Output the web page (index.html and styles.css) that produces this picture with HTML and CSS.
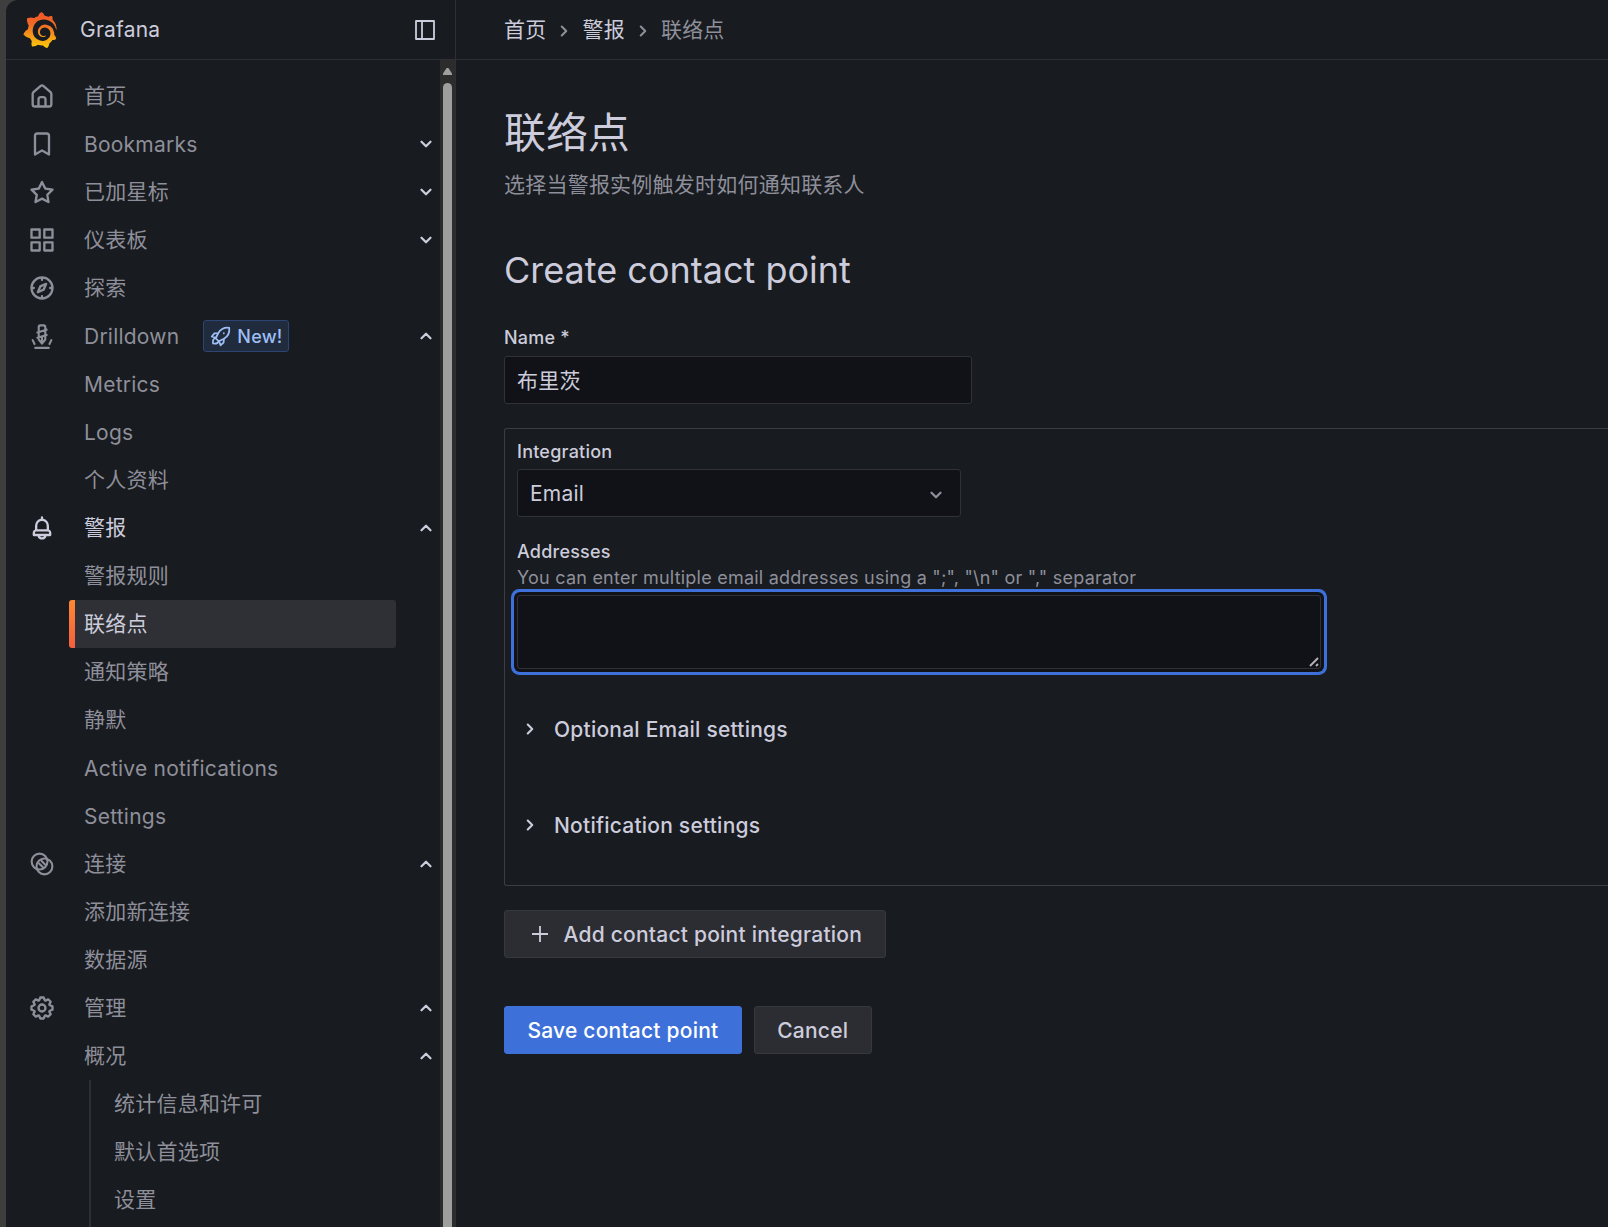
FILE: index.html
```html
<!DOCTYPE html>
<html lang="zh-CN">
<head>
  <meta charset="UTF-8" />
  <meta name="viewport" content="width=device-width, initial-scale=1.0" />
  <title>联络点 - 警报 - Grafana</title>
  <link rel="stylesheet" href="styles.css">
</head>
<body>
  <!-- Shared icons -->
  <svg class="sprite" aria-hidden="true">
    <symbol id="down" viewBox="0 0 24 24"><path d="M6 9l6 6 6-6" fill="none" stroke="currentColor" stroke-width="3" stroke-linecap="round" stroke-linejoin="round"/></symbol>
    <symbol id="up" viewBox="0 0 24 24"><path d="M6 15l6-6 6 6" fill="none" stroke="currentColor" stroke-width="3" stroke-linecap="round" stroke-linejoin="round"/></symbol>
    <symbol id="right" viewBox="0 0 24 24"><path d="M9 6l6 6-6 6" fill="none" stroke="currentColor" stroke-width="2.8" stroke-linecap="round" stroke-linejoin="round"/></symbol>
  </svg>

  <div class="app">
    <aside class="sidebar">
      <div class="brand">
        <svg class="logo" viewBox="0 0 24 24">
          <defs><linearGradient id="flame" x1="0" y1="0" x2="0" y2="1"><stop offset="0.1" stop-color="#f05a28"/><stop offset="0.35" stop-color="#f26b26"/><stop offset="1" stop-color="#fbca0a"/></linearGradient></defs>
          <path fill="url(#flame)" d="M23.02 10.59a8.578 8.578 0 0 0-.862-3.034 8.911 8.911 0 0 0-1.789-2.445c.337-1.342-.413-2.505-.413-2.505-1.292-.08-2.113.4-2.416.62-.052-.02-.102-.044-.154-.064-.22-.089-.446-.172-.677-.247-.231-.073-.47-.14-.711-.197a9.867 9.867 0 0 0-.875-.161C14.557.753 12.94 0 12.94 0c-1.804 1.145-2.147 2.744-2.147 2.744l-.018.093c-.098.029-.2.057-.298.088-.138.042-.275.094-.413.143-.138.055-.275.107-.41.166a8.869 8.869 0 0 0-1.557.87l-.063-.029c-2.497-.955-4.716.195-4.716.195-.203 2.658.996 4.33 1.235 4.636a11.608 11.608 0 0 0-.607 2.635C1.636 12.677.953 15.014.953 15.014c1.926 2.214 4.171 2.351 4.171 2.351.003-.002.006-.002.006-.005.285.509.615.994.986 1.446.156.19.32.371.488.548-.704 2.009.099 3.68.099 3.68 2.144.08 3.553-.937 3.849-1.173a9.784 9.784 0 0 0 3.164.501h.08l.055-.003.107-.002.103-.005.003.002c1.01 1.44 2.788 1.646 2.788 1.646 1.264-1.332 1.337-2.653 1.337-2.94v-.058c0-.02-.003-.039-.003-.06.265-.187.52-.387.758-.6a7.875 7.875 0 0 0 1.415-1.7c1.43.083 2.437-.885 2.437-.885-.236-1.49-1.085-2.216-1.264-2.354l-.018-.013-.016-.013a.217.217 0 0 1-.031-.02c.008-.092.016-.18.02-.27.011-.162.016-.323.016-.48v-.253l-.005-.098-.008-.135a1.891 1.891 0 0 0-.01-.13c-.003-.042-.008-.083-.013-.125l-.016-.124-.018-.122a6.215 6.215 0 0 0-2.032-3.73 6.015 6.015 0 0 0-3.222-1.46 6.292 6.292 0 0 0-.85-.048l-.107.002h-.063l-.044.003-.104.008a4.777 4.777 0 0 0-3.335 1.695c-.332.4-.592.84-.768 1.297a4.594 4.594 0 0 0-.312 1.817l.003.091c.005.055.007.11.013.164a3.615 3.615 0 0 0 .698 1.82 3.53 3.53 0 0 0 1.827 1.282c.33.098.66.14.971.137.039 0 .078 0 .114-.002l.063-.003c.02 0 .041-.003.062-.003.034-.002.065-.007.099-.01.007 0 .018-.003.028-.003l.031-.005.06-.008a1.18 1.18 0 0 0 .112-.02c.036-.008.072-.013.109-.024a2.634 2.634 0 0 0 .914-.415c.028-.02.056-.041.085-.065a.248.248 0 0 0 .039-.35.244.244 0 0 0-.309-.06l-.078.042c-.09.044-.184.083-.283.116a2.476 2.476 0 0 1-.475.096c-.028.003-.054.006-.083.006l-.083.002c-.026 0-.054 0-.08-.002l-.102-.006h-.012l-.024.006c-.016-.003-.031-.003-.044-.006-.031-.002-.06-.007-.091-.01a2.59 2.59 0 0 1-.724-.213 2.557 2.557 0 0 1-.667-.438 2.52 2.52 0 0 1-.805-1.475 2.306 2.306 0 0 1-.029-.444l.006-.122v-.023l.002-.031c.003-.021.003-.04.005-.06a3.163 3.163 0 0 1 1.352-2.29 3.12 3.12 0 0 1 .937-.43 2.946 2.946 0 0 1 .776-.101h.06l.07.002.045.003h.026l.07.005a4.041 4.041 0 0 1 1.635.49 3.94 3.94 0 0 1 1.602 1.662 3.77 3.77 0 0 1 .397 1.414l.005.076.003.075c.002.026.002.05.002.075 0 .024.003.052 0 .07v.065l-.002.073-.008.174a6.195 6.195 0 0 1-.08.639 5.1 5.1 0 0 1-.267.927 5.31 5.31 0 0 1-.624 1.13 5.052 5.052 0 0 1-3.237 2.014 4.82 4.82 0 0 1-.649.066l-.039.003h-.287a6.607 6.607 0 0 1-1.716-.265 6.776 6.776 0 0 1-3.4-2.274 6.75 6.75 0 0 1-.746-1.15 6.616 6.616 0 0 1-.714-2.596l-.005-.083-.002-.02v-.056l-.003-.073v-.096l-.003-.104v-.07l.003-.163c.008-.22.026-.45.054-.678a8.707 8.707 0 0 1 .28-1.355c.128-.444.286-.872.473-1.277a7.04 7.04 0 0 1 1.456-2.1 5.925 5.925 0 0 1 .953-.763c.169-.111.343-.213.524-.306.089-.05.182-.091.273-.135.047-.02.093-.042.138-.062a7.177 7.177 0 0 1 .714-.267l.145-.045c.049-.015.098-.026.148-.041.098-.029.197-.052.296-.076.049-.013.1-.02.15-.033l.15-.032.151-.028.076-.013.075-.01.153-.024c.057-.01.114-.013.171-.023l.169-.021c.036-.003.073-.008.106-.01l.073-.008.036-.003.042-.002c.057-.003.114-.008.171-.01l.086-.006h.023l.037-.003.145-.007a7.999 7.999 0 0 1 1.708.125 7.917 7.917 0 0 1 2.048.68 8.253 8.253 0 0 1 1.672 1.09l.09.077.089.078c.06.052.114.107.171.159.057.052.112.106.166.16.052.055.107.107.159.164a8.671 8.671 0 0 1 1.41 1.978c.012.026.028.052.04.078l.04.078.075.156c.023.051.05.1.07.153l.065.15a8.848 8.848 0 0 1 .45 1.34.19.19 0 0 0 .201.142.186.186 0 0 0 .172-.184c.01-.246.002-.532-.024-.856z"/>
        </svg>
        <span class="brand-name">Grafana</span>
        <svg class="dock" viewBox="0 0 20 20"><path d="M1 1h18v18H1zM7 1v18" fill="none" stroke="currentColor" stroke-width="1.8" stroke-linejoin="round"/></svg>
      </div>

      <div class="nav-wrap">
        <nav class="nav">
          <a class="item">
            <svg class="icon" viewBox="0 0 24 24"><path d="M20,8h0L14,2.74a3,3,0,0,0-4,0L4,8a3,3,0,0,0-1,2.26V19a3,3,0,0,0,3,3H18a3,3,0,0,0,3-3V10.25A3,3,0,0,0,20,8ZM14,20H10V15a1,1,0,0,1,1-1h2a1,1,0,0,1,1,1Zm5-1a1,1,0,0,1-1,1H16V15a3,3,0,0,0-3-3H11a3,3,0,0,0-3,3v5H6a1,1,0,0,1-1-1V10.25a1,1,0,0,1,.34-.75l6-5.25a1,1,0,0,1,1.32,0l6,5.25a1,1,0,0,1,.34.75Z"/></svg>
            <span>首页</span>
          </a>
          <a class="item" lang="en">
            <svg class="icon" viewBox="0 0 24 24"><path d="M16,2H8A3,3,0,0,0,5,5V21a1,1,0,0,0,.5.87,1,1,0,0,0,1,0L12,18.69l5.5,3.18A1,1,0,0,0,18,22a1,1,0,0,0,.5-.13A1,1,0,0,0,19,21V5A3,3,0,0,0,16,2Zm1,17.27-4.5-2.6a1,1,0,0,0-1,0L7,19.27V5A1,1,0,0,1,8,4h8a1,1,0,0,1,1,1Z"/></svg>
            <span>Bookmarks</span>
            <svg class="caret"><use href="#down"/></svg>
          </a>
          <a class="item">
            <svg class="icon" viewBox="0 0 24 24"><path d="M22,9.67A1,1,0,0,0,21.14,9l-5.69-.83L12.9,3a1,1,0,0,0-1.8,0L8.55,8.16,2.86,9a1,1,0,0,0-.81.68,1,1,0,0,0,.25,1l4.13,4-1,5.68A1,1,0,0,0,6.9,21.44L12,18.77l5.1,2.67a.93.93,0,0,0,.46.12,1,1,0,0,0,.59-.19,1,1,0,0,0,.4-1l-1-5.68,4.13-4A1,1,0,0,0,22,9.67Zm-6.15,4a1,1,0,0,0-.29.88l.72,4.2-3.76-2a1.06,1.06,0,0,0-.94,0l-3.76,2,.72-4.2a1,1,0,0,0-.29-.88l-3-3,4.21-.61a1,1,0,0,0,.76-.55L12,5.7l1.88,3.82a1,1,0,0,0,.76.55l4.21.61Z"/></svg>
            <span>已加星标</span>
            <svg class="caret"><use href="#down"/></svg>
          </a>
          <a class="item">
            <svg class="icon" viewBox="0 0 24 24"><path d="M10,13H3a1,1,0,0,0-1,1v7a1,1,0,0,0,1,1h7a1,1,0,0,0,1-1V14A1,1,0,0,0,10,13ZM9,20H4V15H9ZM21,2H14a1,1,0,0,0-1,1v7a1,1,0,0,0,1,1h7a1,1,0,0,0,1-1V3A1,1,0,0,0,21,2ZM20,9H15V4h5Zm1,4H14a1,1,0,0,0-1,1v7a1,1,0,0,0,1,1h7a1,1,0,0,0,1-1V14A1,1,0,0,0,21,13Zm-1,7H15V15h5ZM10,2H3A1,1,0,0,0,2,3v7a1,1,0,0,0,1,1h7a1,1,0,0,0,1-1V3A1,1,0,0,0,10,2ZM9,9H4V4H9Z"/></svg>
            <span>仪表板</span>
            <svg class="caret"><use href="#down"/></svg>
          </a>
          <a class="item">
            <svg class="icon" viewBox="0 0 24 24"><path d="M12,2A10,10,0,1,0,22,12,10,10,0,0,0,12,2Zm1,17.93V19a1,1,0,0,0-2,0v.93A8,8,0,0,1,4.07,13H5a1,1,0,0,0,0-2H4.07A8,8,0,0,1,11,4.07V5a1,1,0,0,0,2,0V4.07A8,8,0,0,1,19.93,11H19a1,1,0,0,0,0,2h.93A8,8,0,0,1,13,19.93ZM15.14,7.55l-5,2.12a1,1,0,0,0-.52.52l-2.12,5a1,1,0,0,0,.21,1.1,1,1,0,0,0,.7.29.93.93,0,0,0,.4-.08l5-2.12a1,1,0,0,0,.52-.52l2.12-5a1,1,0,0,0-1.31-1.31Zm-2.49,5.1-2.28,1,1-2.28,2.28-1Z"/></svg>
            <span>探索</span>
          </a>
          <a class="item" lang="en">
            <svg class="icon line" viewBox="0 0 24 24"><path d="M9.2 15V4.200a1.300 1.300 0 0 1 1.300-1.300h3a1.300 1.300 0 0 1 1.300 1.300V15L12 18.500zM8 9l8-2.400M8 13.500l8-2.400M12 13v4.500M4 15.500l1.600 3.400M20 15.500l-1.600 3.400M6.200 22.200h11.600"/></svg>
            <span>Drilldown</span>
            <span class="badge">
              <svg viewBox="0 0 24 24"><path d="M22 2c-6-.6-10 1.800-12.500 6L6.500 14l3.500 3.500 6-3C20.500 12 22.600 8 22 2zM9.500 8L5 8.500 2 12l4.500 1.500M16 14.500l-.5 4.500-3.500 3-1.500-4.500M6 14c-2.500.5-3 3-2.500 6 3 .5 5.500-.3 6.500-2.500M15.800 8.200v.1"/></svg>
              New!
            </span>
            <svg class="caret"><use href="#up"/></svg>
          </a>
          <a class="item sub" lang="en">Metrics</a>
          <a class="item sub" lang="en">Logs</a>
          <a class="item sub">个人资料</a>
          <a class="item current">
            <svg class="icon" viewBox="0 0 24 24"><path d="M18,13.18V10a6,6,0,0,0-5-5.91V3a1,1,0,0,0-2,0V4.09A6,6,0,0,0,6,10v3.18A3,3,0,0,0,4,16v2a1,1,0,0,0,1,1H8.14a4,4,0,0,0,7.72,0H19a1,1,0,0,0,1-1V16A3,3,0,0,0,18,13.18ZM8,10a4,4,0,0,1,8,0v3H8Zm4,10a2,2,0,0,1-1.72-1h3.44A2,2,0,0,1,12,20Zm6-3H6V16a1,1,0,0,1,1-1H17a1,1,0,0,1,1,1Z"/></svg>
            <span>警报</span>
            <svg class="caret"><use href="#up"/></svg>
          </a>
          <a class="item sub">警报规则</a>
          <a class="item sub active">联络点</a>
          <a class="item sub">通知策略</a>
          <a class="item sub">静默</a>
          <a class="item sub" lang="en">Active notifications</a>
          <a class="item sub" lang="en">Settings</a>
          <a class="item">
            <svg class="icon line" viewBox="0 0 24 24"><circle cx="9.900" cy="9.900" r="6.800"/><circle cx="14.100" cy="14.100" r="6.800"/><path d="M9.500 11.500l3.300 3.300M11.500 9.300l3.300 3.300"/></svg>
            <span>连接</span>
            <svg class="caret"><use href="#up"/></svg>
          </a>
          <a class="item sub">添加新连接</a>
          <a class="item sub">数据源</a>
          <a class="item">
            <svg class="icon" viewBox="0 0 24 24"><path d="M21.320,9.550l-1.890-.63.890-1.780A1,1,0,0,0,20.130,6L18,3.870a1,1,0,0,0-1.150-.19l-1.780.89-.63-1.890A1,1,0,0,0,13.500,2h-3a1,1,0,0,0-.95.680L8.920,4.570,7.140,3.680A1,1,0,0,0,6,3.870L3.870,6a1,1,0,0,0-.19,1.150l.89,1.780-1.890.63A1,1,0,0,0,2,10.500v3a1,1,0,0,0,.68.950l1.890.63-.89,1.780A1,1,0,0,0,3.870,18L6,20.130a1,1,0,0,0,1.150.19l1.780-.89.63,1.890a1,1,0,0,0,.95.680h3a1,1,0,0,0,.95-.68l.63-1.890,1.780.89A1,1,0,0,0,18,20.130L20.130,18a1,1,0,0,0,.19-1.150l-.89-1.780,1.890-.63A1,1,0,0,0,22,13.500v-3A1,1,0,0,0,21.320,9.550ZM20,12.780l-1.200.4A2,2,0,0,0,17.640,16l.57,1.140-1.100,1.100L16,17.640a2,2,0,0,0-2.790,1.160l-.4,1.200H11.220l-.4-1.200A2,2,0,0,0,8,17.640l-1.140.57-1.100-1.100L6.360,16A2,2,0,0,0,5.200,13.180L4,12.780V11.220l1.200-.4A2,2,0,0,0,6.360,8L5.790,6.890l1.100-1.100L8,6.360A2,2,0,0,0,10.820,5.200l.4-1.200h1.560l.4,1.200A2,2,0,0,0,16,6.360l1.140-.57,1.100,1.100L17.640,8a2,2,0,0,0,1.160,2.790l1.200.4ZM12,8a4,4,0,1,0,4,4A4,4,0,0,0,12,8Zm0,6a2,2,0,1,1,2-2A2,2,0,0,1,12,14Z"/></svg>
            <span>管理</span>
            <svg class="caret"><use href="#up"/></svg>
          </a>
          <a class="item sub">概况<svg class="caret"><use href="#up"/></svg></a>
          <div class="nested">
            <a class="item">统计信息和许可</a>
            <a class="item">默认首选项</a>
            <a class="item">设置</a>
          </div>
        </nav>
        <div class="scrollbar">
          <div class="arrow"></div>
          <div class="thumb"></div>
        </div>
      </div>
    </aside>

    <div class="page">
      <header class="crumbs">
        <a>首页</a>
        <svg><use href="#right"/></svg>
        <a>警报</a>
        <svg><use href="#right"/></svg>
        <span>联络点</span>
      </header>

      <main class="content">
        <h1>联络点</h1>
        <p class="subtitle">选择当警报实例触发时如何通知联系人</p>
        <h2>Create contact point</h2>

        <label class="label" for="name">Name *</label>
        <input class="input" id="name" type="text" value="布里茨">

        <section class="integration">
          <div class="label">Integration</div>
          <div class="select">
            <span>Email</span>
            <svg><use href="#down"/></svg>
          </div>
          <label class="label addresses" for="addresses">Addresses</label>
          <p class="hint">You can enter multiple email addresses using a ";", "\n" or "," separator</p>
          <div class="textarea-wrap">
            <textarea class="textarea" id="addresses"></textarea>
            <svg class="grip" viewBox="0 0 10 10"><path d="M1 9l8-8M7 9l2-2" stroke="#b4b4b4" stroke-width="1.900"/></svg>
          </div>
          <div class="collapse">
            <svg><use href="#right"/></svg>
            <span>Optional Email settings</span>
          </div>
          <div class="collapse second">
            <svg><use href="#right"/></svg>
            <span>Notification settings</span>
          </div>
        </section>

        <button class="btn add">
          <svg viewBox="0 0 16 16"><path d="M8 0v16M0 8h16" stroke="currentColor" stroke-width="1.800"/></svg>
          Add contact point integration
        </button>
        <div class="actions">
          <button class="btn primary">Save contact point</button>
          <button class="btn">Cancel</button>
        </div>
      </main>
    </div>
  </div>
</body>
</html>
```

FILE: styles.css
```css
* {
  box-sizing: border-box;
}

body {
  margin: 0;
  height: 100vh;
  padding-left: 6px;
  overflow: hidden;
  background: #3e3e3e;
  color: #ccccdc;
  font-family: Inter, "Noto Sans CJK SC", sans-serif;
  font-size: 21px;
  line-height: 32px;
  letter-spacing: 0.225px;
}

h1, h2, p {
  margin: 0;
  font-weight: 400;
}

.sprite {
  display: none;
}

.app {
  display: flex;
  height: 100vh;
  background: #181b1f;
  border-top-left-radius: 12px;
  overflow: hidden;
}

/* Sidebar */
.sidebar {
  display: flex;
  flex-direction: column;
  flex: none;
  width: 450px;
  border-right: 1px solid #2d2f34;
}

.brand {
  display: flex;
  align-items: center;
  flex: none;
  height: 60px;
  padding: 0 20px 0 16px;
  border-bottom: 1px solid #2d2f34;
}

.logo {
  width: 36px;
  height: 36px;
}

.brand-name {
  margin-left: 22px;
}

.dock {
  width: 20px;
  height: 20px;
  margin-left: auto;
}

.nav-wrap {
  display: flex;
  flex: 1;
  min-height: 0;
}

.nav {
  display: flex;
  flex-direction: column;
  flex: 1;
  padding-top: 12px;
  overflow: hidden;
  color: #8e8f9a;
}

.item {
  display: flex;
  align-items: center;
  flex: none;
  height: 48px;
  padding: 0 5px 0 22px;
}

.item:lang(en) {
  line-height: normal;
}

.icon {
  width: 28px;
  height: 28px;
  margin-right: 28px;
  fill: currentColor;
}

.icon.line {
  fill: none;
  stroke: currentColor;
  stroke-width: 1.8;
  stroke-linecap: round;
  stroke-linejoin: round;
}

.caret {
  width: 18px;
  height: 18px;
  margin-left: auto;
  color: #ccccdc;
}

.sub {
  padding-left: 78px;
}

.current,
.active {
  color: #ccccdc;
}

.active {
  width: 327px;
  margin-left: 63px;
  padding-left: 15px;
  border-radius: 3px;
  background: linear-gradient(#ff8833, #f55f3e) left / 6px 100% no-repeat #2e3035;
}

.badge {
  display: flex;
  align-items: center;
  gap: 6px;
  height: 32px;
  margin-left: 24px;
  padding: 0 5px 0 6px;
  border: 1px solid #2c4572;
  border-radius: 3px;
  background: #202b3d;
  color: #9ebff5;
  font-size: 18px;
  font-weight: 500;
}

.badge svg {
  width: 21px;
  height: 21px;
  fill: none;
  stroke: currentColor;
  stroke-width: 2;
  stroke-linecap: round;
  stroke-linejoin: round;
}

.nested {
  flex: 1;
  margin-left: 83px;
  border-left: 2px solid #2d2f34;
}

.nested .item {
  padding-left: 23px;
}

.scrollbar {
  display: flex;
  flex-direction: column;
  align-items: center;
  width: 15px;
  padding-top: 8px;
  background: #2c2c2c;
}

.arrow {
  width: 9px;
  height: 7px;
  background: #9f9f9f;
  clip-path: polygon(40% 0, 60% 0, 100% 80%, 100% 100%, 0 100%, 0 80%);
}

.thumb {
  flex: 1;
  width: 9px;
  margin-top: 8px;
  border-radius: 5px 5px 0 0;
  background: #9f9f9f;
}

/* Page */
.page {
  flex: 1;
  min-width: 0;
}

.crumbs {
  display: flex;
  align-items: center;
  height: 60px;
  padding-left: 48px;
  border-bottom: 1px solid #2d2f34;
  color: #8e8f9a;
}

.crumbs a {
  color: #ccccdc;
}

.crumbs svg {
  width: 18px;
  height: 18px;
  margin: 3px 9px 0;
}

.content {
  padding: 49px 0 0 48px;
}

h1 {
  font-size: 42px;
  line-height: 48px;
  letter-spacing: -0.1px;
}

.subtitle {
  margin-top: 12px;
  color: #8e8f9a;
}

h2 {
  margin-top: 47px;
  font-size: 36px;
  line-height: 44px;
  letter-spacing: 0;
}

.label {
  display: block;
  font-size: 18px;
  font-weight: 500;
  line-height: 22px;
}

h2 + .label {
  margin-top: 35px;
}

.input {
  display: block;
  width: 468px;
  height: 48px;
  margin-top: 7px;
  padding: 0 12px 2px;
  border: 1px solid #303238;
  border-radius: 3px;
  outline: none;
  background: #111217;
  color: #ccccdc;
  font: inherit;
  letter-spacing: inherit;
}

.integration {
  margin-top: 24px;
  padding: 12px 12px 44px;
  border: 1px solid #3c3e43;
  border-right: none;
  border-radius: 3px 0 0 3px;
}

.select {
  display: flex;
  align-items: center;
  justify-content: space-between;
  width: 444px;
  height: 48px;
  margin-top: 6px;
  padding: 0 15px 0 12px;
  border: 1px solid #303238;
  border-radius: 3px;
  background: #111217;
  line-height: normal;
}

.select svg {
  width: 18px;
  height: 18px;
  margin-top: 3px;
  color: #8e8f9a;
}

.addresses {
  margin-top: 24px;
}

.hint {
  margin-top: 4px;
  color: #8e8f9a;
  font-size: 18px;
  line-height: 22px;
}

.textarea-wrap {
  position: relative;
  width: 804px;
  margin-top: 6px;
}

.textarea {
  display: block;
  width: 100%;
  height: 74px;
  padding: 6px 12px;
  border: 1px solid #303238;
  border-radius: 3px;
  outline: none;
  resize: none;
  background: #111217;
  box-shadow: 0 0 0 3px #111217, 0 0 0 6px #3d71d9;
  color: #ccccdc;
  font: inherit;
}

.grip {
  position: absolute;
  right: 2px;
  bottom: 2px;
  width: 10px;
  height: 10px;
}

.collapse {
  display: flex;
  align-items: center;
  gap: 15px;
  height: 32px;
  margin-top: 44px;
  padding-left: 4px;
  font-weight: 500;
  line-height: normal;
}

.collapse.second {
  margin-top: 64px;
}

.collapse svg {
  width: 18px;
  height: 18px;
}

.btn {
  height: 48px;
  padding: 0 22.4px;
  border: 1px solid #37383e;
  border-radius: 3px;
  background: #2c2d32;
  color: #ccccdc;
  font: inherit;
  font-weight: 500;
  line-height: normal;
  letter-spacing: inherit;
}

.primary {
  border-color: #3d71d9;
  background: #3d71d9;
  color: #fff;
}

.add {
  display: flex;
  align-items: center;
  gap: 15.5px;
  margin-top: 24px;
  padding: 0 23px 0 27px;
}

.add svg {
  width: 16px;
  height: 16px;
}

.actions {
  display: flex;
  gap: 12px;
  margin-top: 48px;
}
```
